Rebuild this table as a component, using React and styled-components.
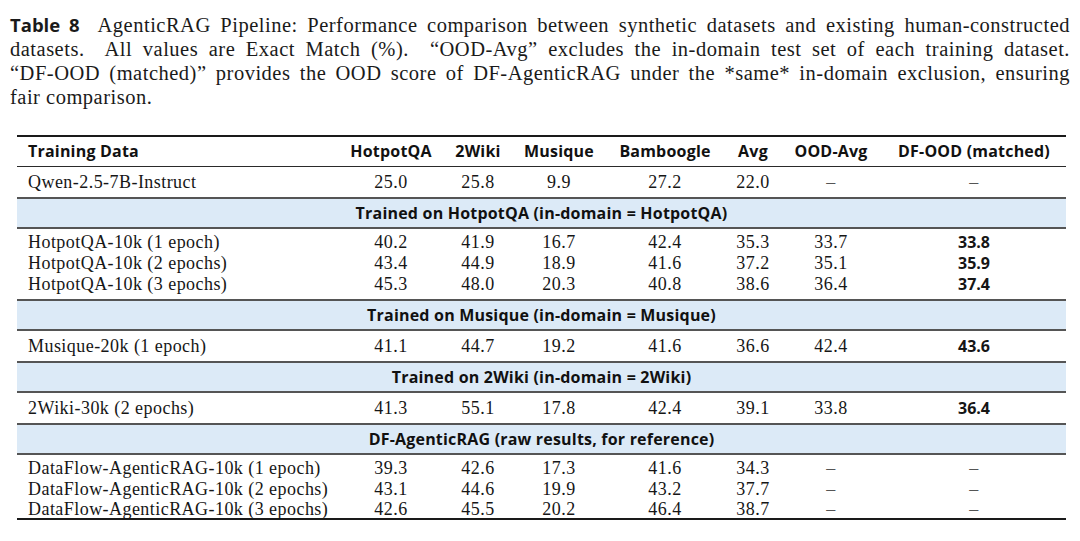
import React from 'react'
import styled, { createGlobalStyle } from 'styled-components'

const SERIF = `'Liberation Serif', 'Times New Roman', serif`
const SANS = `'Open Sans', 'Lato', 'Noto Sans', sans-serif`

const GlobalStyle = createGlobalStyle`
  body {
    margin: 0;
    background: #fff;
    color: #141414;
  }
`

const columns = ['HotpotQA', '2Wiki', 'Musique', 'Bamboogle', 'Avg', 'OOD-Avg', 'DF-OOD (matched)']
const widths = [323, 102, 72, 90, 122, 54, 102, 184]

const baseline = ['Qwen-2.5-7B-Instruct', '25.0', '25.8', '9.9', '27.2', '22.0', '–', '–']

const sections = [
  {
    title: 'Trained on HotpotQA (in-domain = HotpotQA)',
    rows: [
      ['HotpotQA-10k (1 epoch)', '40.2', '41.9', '16.7', '42.4', '35.3', '33.7', '33.8'],
      ['HotpotQA-10k (2 epochs)', '43.4', '44.9', '18.9', '41.6', '37.2', '35.1', '35.9'],
      ['HotpotQA-10k (3 epochs)', '45.3', '48.0', '20.3', '40.8', '38.6', '36.4', '37.4'],
    ],
  },
  {
    title: 'Trained on Musique (in-domain = Musique)',
    rows: [['Musique-20k (1 epoch)', '41.1', '44.7', '19.2', '41.6', '36.6', '42.4', '43.6']],
  },
  {
    title: 'Trained on 2Wiki (in-domain = 2Wiki)',
    rows: [['2Wiki-30k (2 epochs)', '41.3', '55.1', '17.8', '42.4', '39.1', '33.8', '36.4']],
  },
  {
    title: 'DF-AgenticRAG (raw results, for reference)',
    rows: [
      ['DataFlow-AgenticRAG-10k (1 epoch)', '39.3', '42.6', '17.3', '41.6', '34.3', '–', '–'],
      ['DataFlow-AgenticRAG-10k (2 epochs)', '43.1', '44.6', '19.9', '43.2', '37.7', '–', '–'],
      ['DataFlow-AgenticRAG-10k (3 epochs)', '42.6', '45.5', '20.2', '46.4', '38.7', '–', '–'],
    ],
    end: true,
  },
]

export default function App() {
  return (
    <Page>
      <GlobalStyle />
      <Caption>
        <CaptionLine>
          <Label>Table 8</Label>&nbsp; AgenticRAG Pipeline: Performance comparison between synthetic
          datasets and existing human-constructed
        </CaptionLine>
        <CaptionLine>
          datasets.&nbsp; All values are Exact Match (%).&nbsp; “OOD-Avg” excludes the in-domain test
          set of each training dataset.
        </CaptionLine>
        <CaptionLine>
          “DF-OOD (matched)” provides the OOD score of DF-AgenticRAG under the *same* in-domain
          exclusion, ensuring
        </CaptionLine>
        <CaptionLine $last>fair comparison.</CaptionLine>
      </Caption>

      <Table>
        <colgroup>
          {widths.map((w, i) => (
            <col key={i} style={{ width: w }} />
          ))}
        </colgroup>
        <thead>
          <tr>
            <HeadCell $left>Training Data</HeadCell>
            {columns.map((c) => (
              <HeadCell key={c}>{c}</HeadCell>
            ))}
          </tr>
        </thead>
        <tbody>
          <tr>
            {baseline.map((v, i) => (
              <Cell key={i} $left={i === 0} $single $rule="thin" $dash={v === '–'}>
                {v}
              </Cell>
            ))}
          </tr>
          {sections.map((s) => (
            <React.Fragment key={s.title}>
              <tr>
                <BandCell colSpan={8}>{s.title}</BandCell>
              </tr>
              {s.rows.map((r, ri) => {
                const single = s.rows.length === 1
                return (
                  <tr key={r[0]}>
                    {r.map((v, i) => (
                      <Cell
                        key={i}
                        $left={i === 0}
                        $single={single}
                        $first={!single && ri === 0}
                        $lastRow={!single && ri === s.rows.length - 1}
                        $end={s.end && ri === s.rows.length - 1}
                        $rule={ri === 0 ? 'thick' : null}
                        $bold={i === 7 && v !== '–'}
                        $dash={v === '–'}
                      >
                        {v}
                      </Cell>
                    ))}
                  </tr>
                )
              })}
            </React.Fragment>
          ))}
        </tbody>
      </Table>
    </Page>
  )
}

const Page = styled.div`
  width: 1080px;
  padding: 13px 10px 0;
  box-sizing: border-box;
`

const Caption = styled.div`
  font-family: ${SERIF};
  font-size: 20.5px;
  letter-spacing: 0.5px;
  line-height: 24px;
  color: #1a1a1a;
`

const CaptionLine = styled.div`
  text-align: ${(p) => (p.$last ? 'left' : 'justify')};
  text-align-last: ${(p) => (p.$last ? 'left' : 'justify')};
  white-space: nowrap;
`

const Label = styled.span`
  font-family: ${SANS};
  font-weight: 700;
  font-size: 18.5px;
  letter-spacing: 0;
`

const Table = styled.table`
  margin: 26px 0 0 7px;
  width: 1049px;
  table-layout: fixed;
  border-collapse: separate;
  border-spacing: 0;
  border-top: 2px solid #1a1a1a;
`

const HeadCell = styled.th`
  font-family: ${SANS};
  font-weight: 700;
  font-size: 16px;
  letter-spacing: 0.2px;
  line-height: 29px;
  padding: 0 0 0 ${(p) => (p.$left ? '11px' : '0')};
  text-align: ${(p) => (p.$left ? 'left' : 'center')};
  white-space: nowrap;
  color: #111;
`

const ruleFor = (rule) => {
  if (rule === 'thin') return 'border-top: 1px solid #2a2a2a;'
  if (rule === 'thick') return 'border-top: 2px solid #555;'
  return ''
}

const Cell = styled.td`
  font-family: ${(p) => (p.$bold ? SANS : SERIF)};
  font-weight: ${(p) => (p.$bold ? 700 : 400)};
  font-size: ${(p) => (p.$bold ? '16px' : '18px')};
  letter-spacing: ${(p) => (p.$bold ? '0' : '0.45px')};
  color: ${(p) => (p.$dash ? '#555' : '#161616')};
  text-align: ${(p) => (p.$left ? 'left' : 'center')};
  white-space: nowrap;
  padding: 0 0 0 ${(p) => (p.$left ? '11px' : '0')};
  line-height: ${(p) => (p.$single ? '30px' : p.$end ? '18px' : '21px')};
  padding-top: ${(p) => (p.$first ? '3px' : '0')};
  padding-bottom: ${(p) => (p.$lastRow && !p.$end ? '4px' : '0')};
  ${(p) => ruleFor(p.$rule)}
  ${(p) => (p.$end ? 'border-bottom: 2px solid #1a1a1a;' : '')}
`

const BandCell = styled.td`
  background: #dceaf7;
  border-top: 2px solid #555;
  padding: 0;
  font-family: ${SANS};
  font-weight: 700;
  font-size: 16px;
  letter-spacing: 0.2px;
  line-height: 28px;
  text-align: center;
  color: #111;
`
